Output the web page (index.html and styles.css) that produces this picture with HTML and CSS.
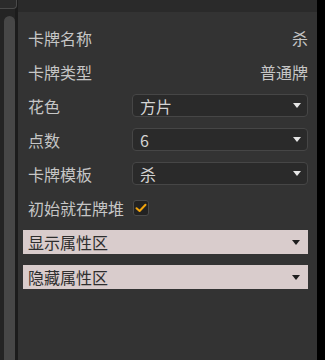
FILE: index.html
```html
<!DOCTYPE html>
<html lang="zh">
<head>
  <meta charset="UTF-8" />
  <title>卡牌属性</title>
  <link rel="stylesheet" href="styles.css">
</head>
<body>
  <div class="frame">
    <aside class="side">
      <div class="side-tab"></div>
      <div class="side-track"><div class="side-thumb"></div></div>
    </aside>

    <main class="main">
      <div class="topbar"></div>
      <div class="panel">
        <div class="row">
          <span class="label">卡牌名称</span>
          <span class="value">杀</span>
        </div>
        <div class="row">
          <span class="label">卡牌类型</span>
          <span class="value">普通牌</span>
        </div>
        <div class="row">
          <span class="label">花色</span>
          <div class="select"><span>方片</span><i class="arrow"></i></div>
        </div>
        <div class="row">
          <span class="label">点数</span>
          <div class="select"><span>6</span><i class="arrow"></i></div>
        </div>
        <div class="row">
          <span class="label">卡牌模板</span>
          <div class="select"><span>杀</span><i class="arrow"></i></div>
        </div>
        <div class="row">
          <span class="label">初始就在牌堆</span>
          <span class="check">
            <svg width="12" height="10" viewBox="0 0 12 10"><path d="M1.5 5.2 L4.6 8 L10.5 1.8" fill="none" stroke="#f2a40c" stroke-width="2" stroke-linecap="round" stroke-linejoin="round"/></svg>
          </span>
        </div>
        <div class="group"><span>显示属性区</span><i class="arrow dark"></i></div>
        <div class="group"><span>隐藏属性区</span><i class="arrow dark"></i></div>
      </div>
    </main>

    <div class="edge"></div>
  </div>
</body>
</html>
```

FILE: styles.css
```css
* {
  box-sizing: border-box;
}

body {
  margin: 0;
  background: #000;
  font-family: "Noto Sans CJK SC", "Noto Sans", sans-serif;
  font-size: 16px;
}

.frame {
  display: flex;
  width: 325px;
  height: 360px;
}

/* left strip with scrollbar */
.side {
  width: 18px;
  display: flex;
  flex-direction: column;
  background: #242424;
  border-right: 3px solid #1c1c1c;
}
.side-tab {
  height: 9px;
  width: 17px;
  background: #2b2b2b;
  border: 1px solid #4a4a4a;
  border-top: none;
  border-left: none;
  border-bottom-right-radius: 4px;
}
.side-track {
  flex: 1;
  padding: 7px 0 0 4px;
}
.side-thumb {
  width: 11px;
  height: 100%;
  background: #474747;
  border-radius: 6px 6px 0 0;
}

.main {
  width: 299px;
  display: flex;
  flex-direction: column;
  background: #333;
}
.topbar {
  height: 12px;
  background: #2a2a2a;
}
.panel {
  padding: 14px 9px 0 5px;
  display: flex;
  flex-direction: column;
  gap: 11px;
}

.row {
  height: 23px;
  display: flex;
  align-items: center;
  padding-left: 5px;
  color: #c6c6c6;
}
.label {
  width: 104px;
  flex-shrink: 0;
}
.value {
  margin-left: auto;
}

.select {
  flex: 1;
  height: 23px;
  display: flex;
  align-items: center;
  padding: 0 6px 0 7px;
  background: #2a2a2a;
  border: 1px solid #464646;
  border-radius: 4px;
  color: #d4d4d4;
}
.arrow {
  margin-left: auto;
  width: 0;
  height: 0;
  border-left: 4px solid transparent;
  border-right: 4px solid transparent;
  border-top: 5px solid #e6e6e6;
}
.arrow.dark {
  border-top-color: #1e1e1e;
  margin-right: 2px;
}

.check {
  width: 16px;
  height: 16px;
  margin-left: 1px;
  display: flex;
  align-items: center;
  justify-content: center;
  background: #222;
  border: 1px solid #4a4a4a;
  border-radius: 3px;
}

.group {
  height: 24px;
  display: flex;
  align-items: center;
  padding: 0 6px 0 5px;
  background: #d9cccc;
  color: #2e2e2e;
}
```
